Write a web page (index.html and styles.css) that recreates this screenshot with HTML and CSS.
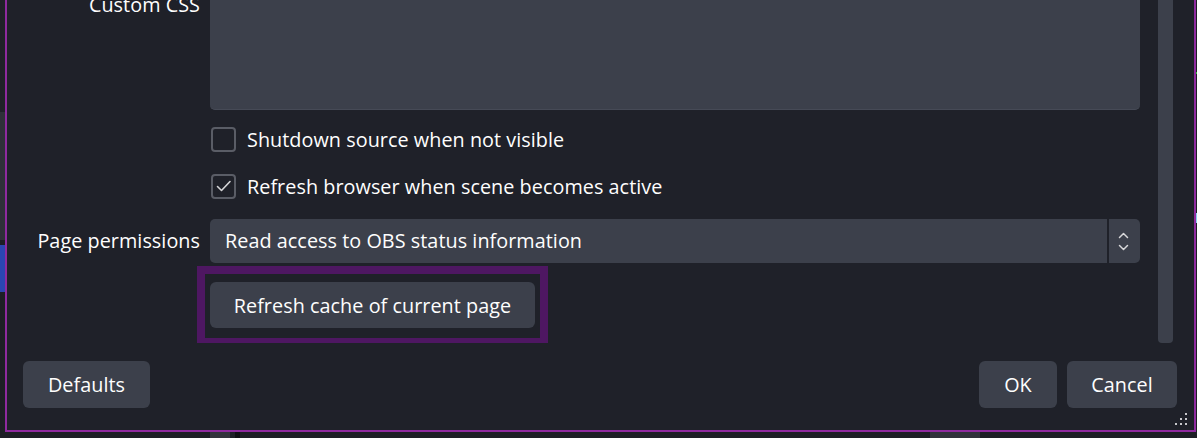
FILE: index.html
```html
<!DOCTYPE html>
<html>
<head>
<meta charset="utf-8">
<link rel="stylesheet" href="styles.css">
</head>
<body>
<div class="screen">
  <div class="left-strip">
    <div class="seg seg-dark"></div>
    <div class="seg seg-grey"></div>
    <div class="seg seg-line"></div>
    <div class="seg seg-blue"></div>
    <div class="seg seg-rest"></div>
  </div>
  <div class="middle">
    <div class="dialog">
      <div class="scroll-area">
        <div class="form">
          <div class="label label-top">Custom CSS</div>
          <div class="textarea"></div>

          <div class="label"></div>
          <div class="check-row row-1">
            <span class="box"></span>
            <span class="check-text">Shutdown source when not visible</span>
          </div>

          <div class="label"></div>
          <div class="check-row row-2">
            <span class="box">
              <svg width="24" height="24" viewBox="0 0 24 24"><polyline points="5.5,12.5 9.5,16.5 18,7.5" fill="none" stroke="#d6d6d8" stroke-width="1.6" stroke-linecap="round" stroke-linejoin="round"/></svg>
            </span>
            <span class="check-text">Refresh browser when scene becomes active</span>
          </div>

          <div class="label label-combo">Page permissions</div>
          <div class="combo">
            <span class="combo-text">Read access to OBS status information</span>
            <span class="combo-arrows">
              <svg width="31" height="44" viewBox="0 0 31 44"><polyline points="10.5,18.5 14.5,14.5 18.5,18.5" fill="none" stroke="#d8d8da" stroke-width="1.5" stroke-linecap="round" stroke-linejoin="round"/><polyline points="10.5,26.5 14.5,30.5 18.5,26.5" fill="none" stroke="#d8d8da" stroke-width="1.5" stroke-linecap="round" stroke-linejoin="round"/></svg>
            </span>
          </div>

          <div class="label"></div>
          <div class="btn-row">
            <div class="highlight-wrap">
              <button class="btn btn-refresh">Refresh cache of current page</button>
            </div>
          </div>
        </div>
        <div class="scrollbar"></div>
      </div>
      <div class="buttons">
        <button class="btn btn-defaults">Defaults</button>
        <div class="spacer"></div>
        <button class="btn btn-ok">OK</button>
        <button class="btn btn-cancel">Cancel</button>
      </div>
      <div class="grip">
        <i class="d d1"></i><i class="d d2"></i><i class="d d3"></i><i class="d d4"></i><i class="d d5"></i><i class="d d6"></i>
      </div>
    </div>
    <div class="bottom-strip">
      <div class="bs-gap1"></div>
      <div class="bs-grey"></div>
      <div class="bs-gap2"></div>
      <div class="bs-black"></div>
      <div class="bs-fill"></div>
      <div class="bs-grey2"></div>
    </div>
  </div>
  <div class="right-strip">
    <div class="rs-a"></div>
    <div class="rs-green"></div>
    <div class="rs-b"></div>
    <div class="rs-cyan"></div>
  </div>
</div>
</body>
</html>
```

FILE: styles.css
```css
* { box-sizing: border-box; }
html, body {
  margin: 0;
  padding: 0;
  background: #1d1f25;
  overflow: hidden;
}
body {
  font-family: "Open Sans", "Noto Sans", sans-serif;
  font-size: 19.8px;
  letter-spacing: 0.05px;
  color: #fefefe;
}
.screen {
  width: 1197px;
  height: 438px;
  display: flex;
  overflow: hidden;
}
.left-strip {
  width: 5px;
  display: flex;
  flex-direction: column;
}
.seg-dark { height: 112px; background: #1f2128; }
.seg-grey { height: 128px; background: #2e3038; }
.seg-line { height: 5px; background: #1c1e24; }
.seg-blue { height: 47px; background: #2a46b2; }
.seg-rest { flex: 1; background: #1d1f25; }

.middle {
  width: 1191px;
  display: flex;
  flex-direction: column;
}
.dialog {
  position: relative;
  height: 432px;
  background: #1f2129;
  border-left: 2px solid #8f2a9f;
  border-right: 2px solid #8f2a9f;
  border-bottom: 2px solid #8f2a9f;
  display: flex;
  flex-direction: column;
}
.scroll-area {
  height: 343px;
  display: flex;
  overflow: hidden;
}
.form {
  width: 1133px;
  margin-top: -17px;
  display: grid;
  grid-template-columns: 193px 930px;
  column-gap: 10px;
  align-content: start;
}
.label {
  text-align: right;
  white-space: nowrap;
}
.label-top {
  height: 44px;
  line-height: 44px;
}
.label-combo {
  margin-top: 11px;
  height: 44px;
  line-height: 43px;
}
.textarea {
  height: 127px;
  background: #3c404b;
  border-radius: 5px;
  border-bottom: 1px solid #464a56;
}
.check-row {
  height: 44px;
  display: flex;
  align-items: center;
  gap: 11px;
}
.row-1 { margin-top: 7px; }
.row-2 { margin-top: 3px; }
.box {
  width: 25px;
  height: 25px;
  margin-left: 1px;
  border: 2px solid #5a5d66;
  border-radius: 4px;
  display: flex;
  align-items: center;
  justify-content: center;
}
.box svg { display: block; flex: none; }
.check-text {
  white-space: nowrap;
  line-height: 1;
  margin-top: 1px;
}
.combo {
  margin-top: 11px;
  height: 44px;
  background: #3c404b;
  border-radius: 5px;
  display: flex;
  align-items: center;
}
.combo-text {
  flex: 1;
  padding-left: 15px;
  white-space: nowrap;
  line-height: 1;
  margin-top: 0;
}
.combo-arrows {
  width: 33px;
  height: 44px;
  border-left: 2px solid #1f2129;
  display: flex;
}
.combo-arrows svg { display: block; }
.btn-row {
  margin-top: 19px;
}
.highlight-wrap {
  position: relative;
  width: 325px;
}
.highlight-wrap::after {
  content: "";
  position: absolute;
  top: -16px;
  left: -13px;
  right: -13px;
  bottom: -18px;
  border: 8px solid #4e1762;
  pointer-events: none;
}
.btn {
  font-family: "Open Sans", "Noto Sans", sans-serif;
  font-size: 19.8px;
  letter-spacing: 0.05px;
  color: #fefefe;
  background: #3c404b;
  border: none;
  border-radius: 6px;
  padding: 0;
  margin: 0;
  height: 47px;
  text-align: center;
  white-space: nowrap;
  line-height: 1;
  display: block;
}
.btn-refresh {
  width: 325px;
  height: 46px;
  padding-top: 1px;
}
.scrollbar {
  width: 15px;
  margin-left: 18px;
  height: 100%;
  background: #3c404b;
  border-radius: 0 0 4px 4px;
}
.buttons {
  display: flex;
  padding: 18px 17px 0 16px;
  gap: 10px;
}
.spacer { flex: 1; }
.btn-defaults { width: 127px; }
.btn-ok { width: 78px; }
.btn-cancel { width: 110px; }

.grip {
  position: absolute;
  right: 5px;
  bottom: 3px;
  width: 14px;
  height: 14px;
}
.d {
  position: absolute;
  width: 2px;
  height: 2px;
  background: #c8c8cc;
}
.d1 { left: 10px; top: 0; }
.d2 { left: 5px; top: 5px; }
.d3 { left: 10px; top: 5px; }
.d4 { left: 0; top: 10px; }
.d5 { left: 5px; top: 10px; }
.d6 { left: 10px; top: 10px; }

.bottom-strip {
  flex: 1;
  display: flex;
  background: #1d1f25;
}
.bs-gap1 { width: 205px; }
.bs-grey { width: 20px; background: #32343c; }
.bs-gap2 { width: 5px; }
.bs-black { width: 5px; background: #0e0f12; }
.bs-fill { width: 690px; }
.bs-grey2 { width: 50px; background: #30323a; }

.right-strip {
  width: 1px;
  display: flex;
  flex-direction: column;
}
.rs-a { height: 72px; background: #1d1f25; }
.rs-green { height: 2px; background: #2ec22e; }
.rs-b { height: 139px; background: #1d1f25; }
.rs-cyan { height: 10px; background: #8fd0f0; }
```
